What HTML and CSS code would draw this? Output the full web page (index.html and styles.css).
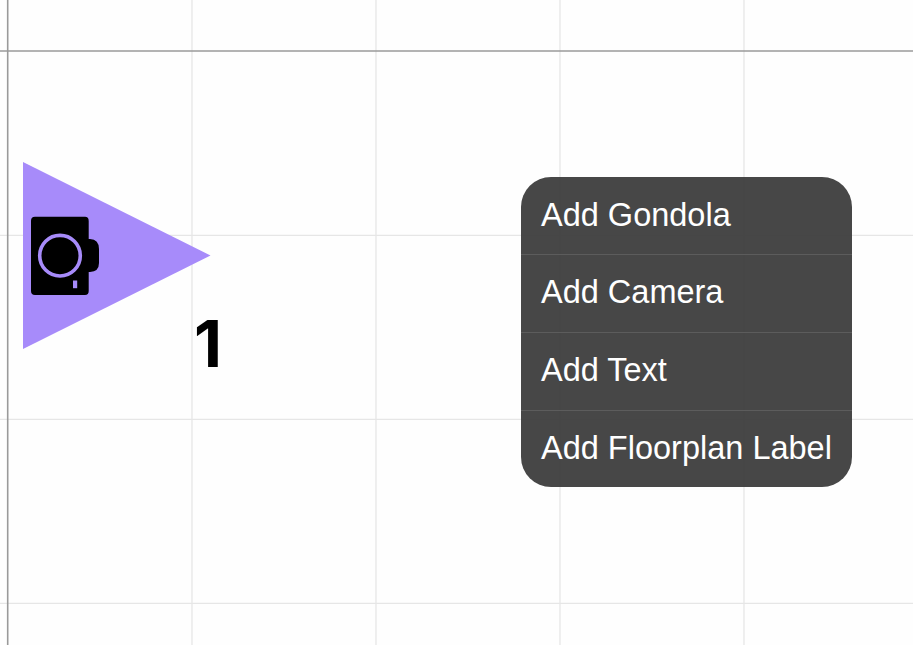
FILE: index.html
```html
<!DOCTYPE html>
<html lang="en">
<head>
<meta charset="utf-8">
<title>Floorplan</title>
<link rel="stylesheet" href="styles.css">
</head>
<body>
<main class="canvas">
  <svg class="plan" width="913" height="645" viewBox="0 0 913 645">
    <g class="grid">
      <path d="M192 0V645M376 0V645M560 0V645M744 0V645"/>
      <path d="M0 235.300H913M0 419.300H913M0 603.300H913"/>
    </g>
    <path class="axis-v" d="M7.700 0V645"/>
    <path class="axis-h" d="M0 51H913"/>
    <polygon class="cone" points="23,162 210.500,255.500 23,349"/>
    <path class="cam" d="M35 216.800H85Q88.700 216.800 88.700 221V239H90Q99 239.500 99 249V263Q99 271.500 90 272H88.700V291Q88.700 295 85 295H35Q31 295 31 291V221Q31 216.800 35 216.800Z"/>
    <circle class="lens" cx="60" cy="255.700" r="20.300"/>
    <rect class="led" x="73" y="280.500" width="4.200" height="7.700"/>
    <text class="num" x="194" y="367">1</text>
  </svg>
  <ul class="menu">
    <li class="item">Add Gondola</li>
    <li class="item">Add Camera</li>
    <li class="item">Add Text</li>
    <li class="item">Add Floorplan Label</li>
  </ul>
</main>
</body>
</html>
```

FILE: styles.css
```css
html, body {
  margin: 0;
  padding: 0;
  background: #fefefe;
}
.canvas {
  position: relative;
  width: 913px;
  height: 645px;
  overflow: hidden;
}
.plan {
  display: block;
}
.grid path {
  fill: none;
  stroke: #e6e6e6;
  stroke-width: 1.3;
}
.axis-v, .axis-h {
  fill: none;
  stroke: #9a9a9a;
  stroke-width: 1.6;
}
.cone {
  fill: #a78bfa;
}
.cam {
  fill: #000;
}
.lens {
  fill: none;
  stroke: #a78bfa;
  stroke-width: 3.6;
}
.led {
  fill: #a78bfa;
}
.num {
  font-family: Inter, Roboto, "Liberation Sans", Arial, sans-serif;
  font-weight: 700;
  font-size: 65px;
  fill: #000;
}
.menu {
  position: absolute;
  left: 521px;
  top: 176.900px;
  width: 331px;
  margin: 0;
  padding: 0;
  list-style: none;
  background: rgba(60, 60, 60, 0.94);
  border-radius: 30px;
  overflow: hidden;
}
.item {
  box-sizing: border-box;
  height: 77.550px;
  padding: 0 20px;
  line-height: 76px;
  font-family: "Liberation Sans", Arial, sans-serif;
  font-size: 32.500px;
  color: #fff;
  white-space: nowrap;
}
.item + .item {
  border-top: 1px solid #5c5c5c;
  line-height: 74px;
}
```
